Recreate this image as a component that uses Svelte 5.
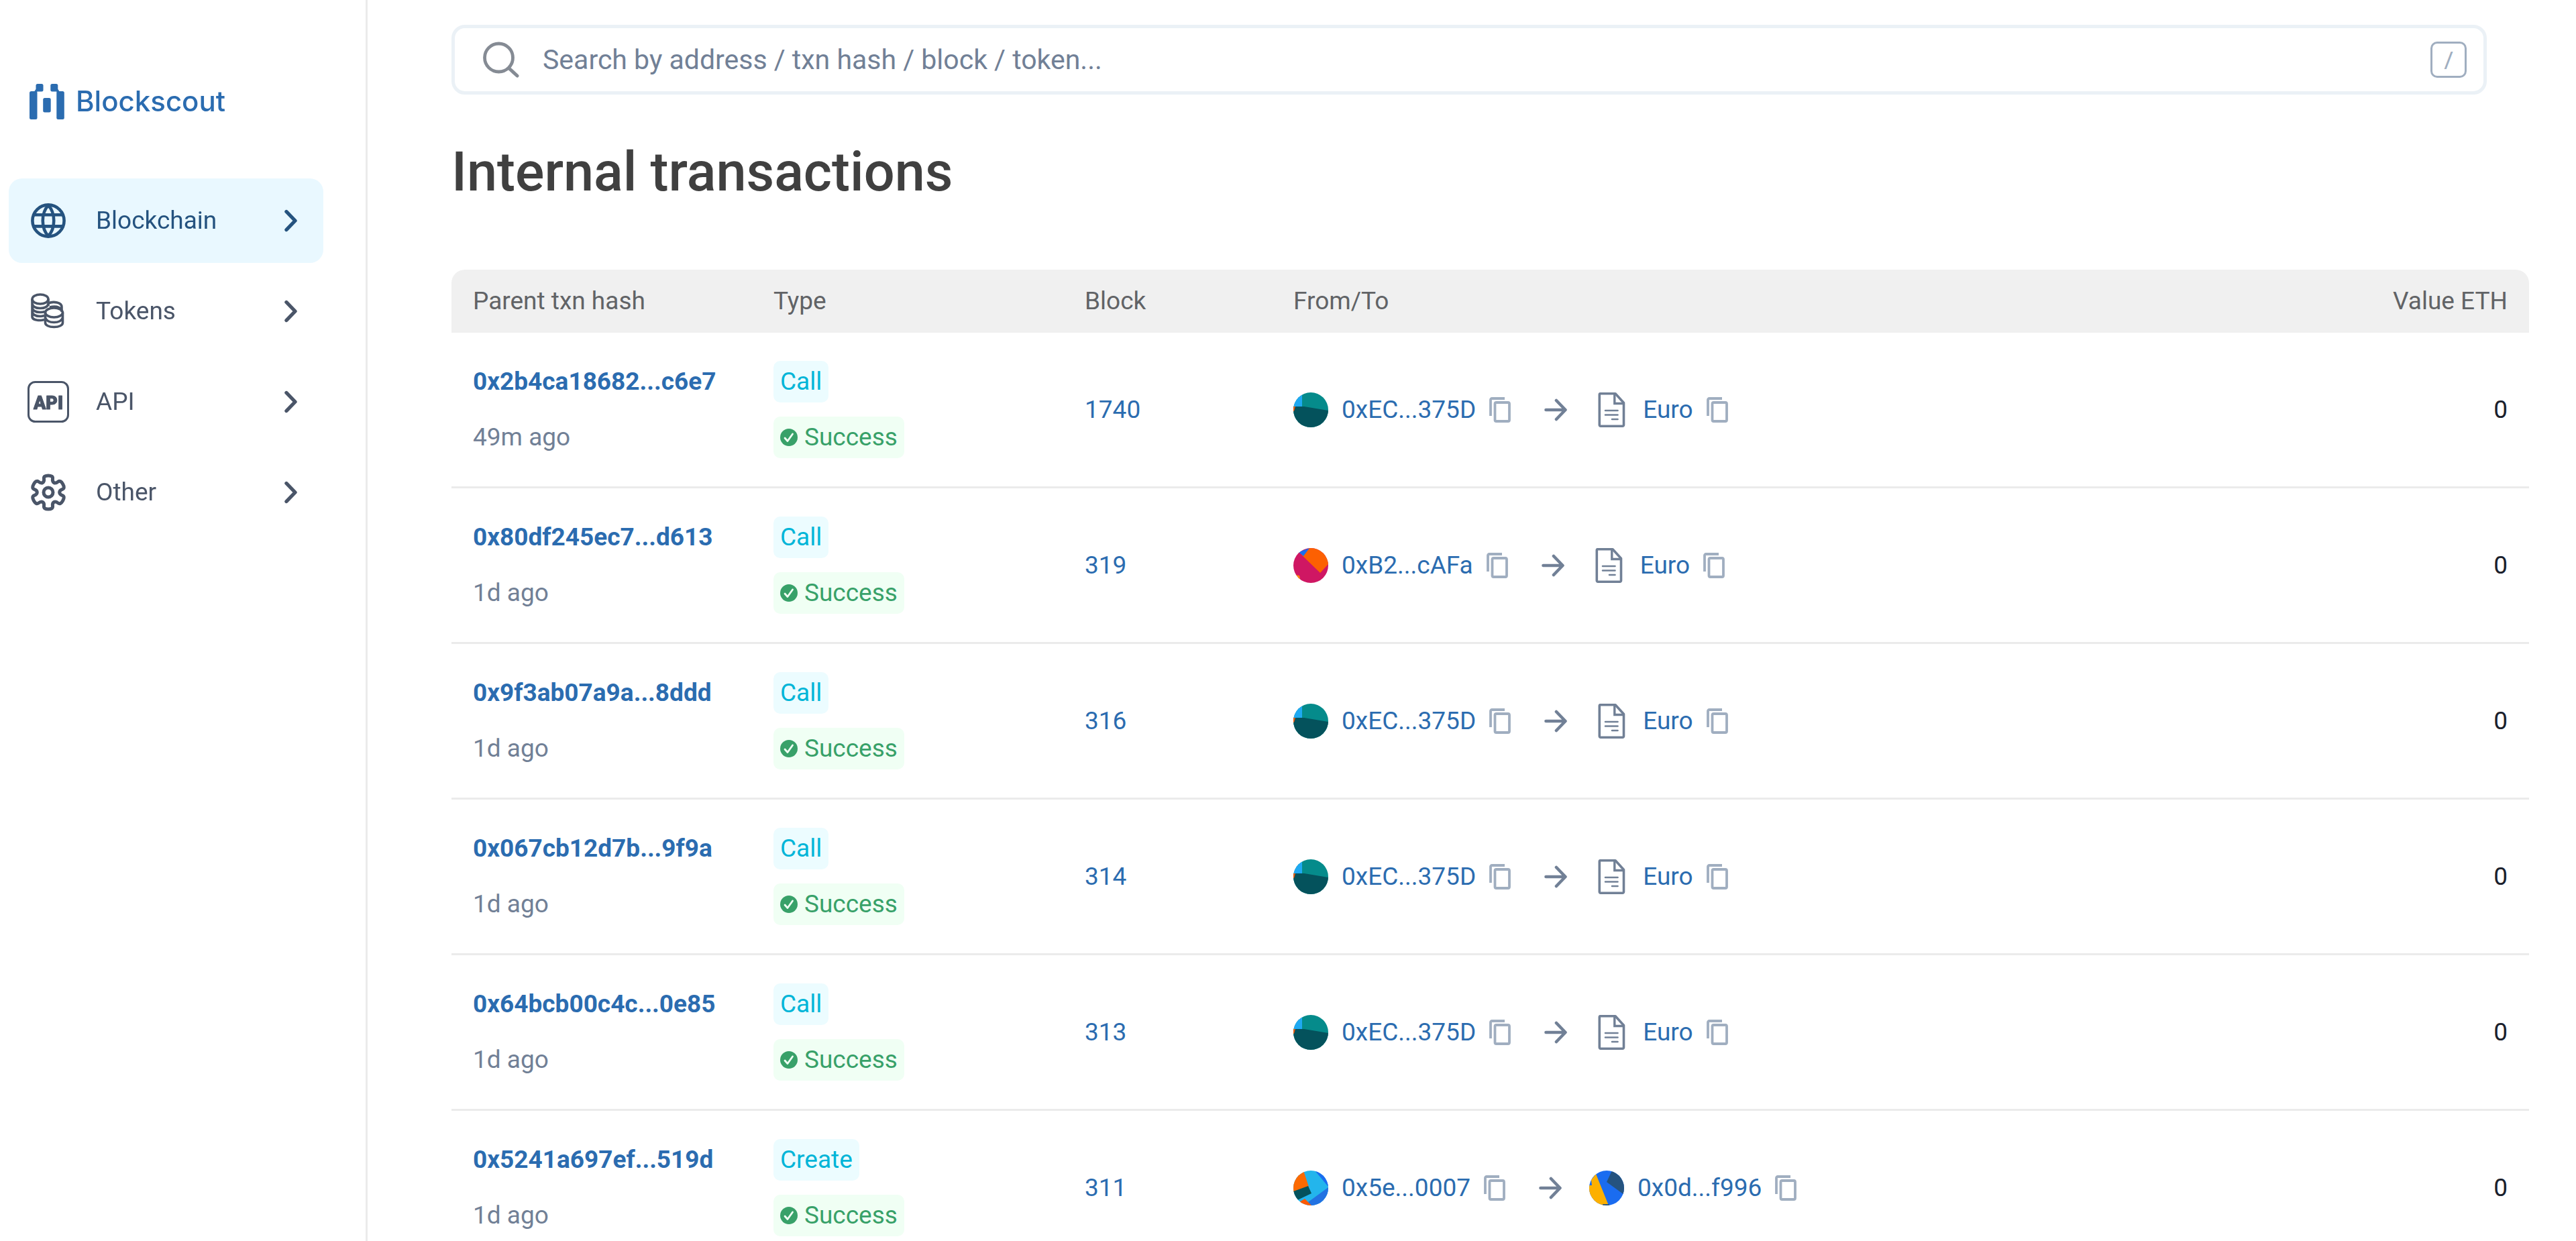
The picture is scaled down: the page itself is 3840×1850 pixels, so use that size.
<script>
  const nav = [
    { icon: 'globe', label: 'Blockchain', active: true },
    { icon: 'coins', label: 'Tokens' },
    { icon: 'api', label: 'API' },
    { icon: 'gear', label: 'Other' },
  ];

  const teal = { avatar: 'teal', name: '0xEC...375D' };
  const euro = { avatar: 'contract', name: 'Euro' };

  const rows = [
    { hash: '0x2b4ca18682...c6e7', age: '49m ago', type: 'Call', block: 1740, from: teal, to: euro },
    { hash: '0x80df245ec7...d613', age: '1d ago', type: 'Call', block: 319, from: { avatar: 'pink', name: '0xB2...cAFa' }, to: euro },
    { hash: '0x9f3ab07a9a...8ddd', age: '1d ago', type: 'Call', block: 316, from: teal, to: euro },
    { hash: '0x067cb12d7b...9f9a', age: '1d ago', type: 'Call', block: 314, from: teal, to: euro },
    { hash: '0x64bcb00c4c...0e85', age: '1d ago', type: 'Call', block: 313, from: teal, to: euro },
    {
      hash: '0x5241a697ef...519d', age: '1d ago', type: 'Create', block: 311,
      from: { avatar: 'sky', name: '0x5e...0007' }, to: { avatar: 'amber', name: '0x0d...f996' },
    },
  ];

  // Six-toothed cog, smoothed by running quadratic curves through edge midpoints.
  function cog(cx, cy) {
    const pts = [];
    for (let k = 0; k < 6; k++) {
      for (const [r, d] of [[17, -20], [26, -16], [26, 16], [17, 20]]) {
        const a = ((k * 60 + d - 90) * Math.PI) / 180;
        pts.push([cx + r * Math.cos(a), cy + r * Math.sin(a)]);
      }
    }
    const mid = (p, q) => `${((p[0] + q[0]) / 2).toFixed(1)} ${((p[1] + q[1]) / 2).toFixed(1)}`;
    let d = `M${mid(pts[pts.length - 1], pts[0])}`;
    pts.forEach((p, i) => {
      d += `Q${p[0].toFixed(1)} ${p[1].toFixed(1)} ${mid(p, pts[(i + 1) % pts.length])}`;
    });
    return d + 'Z';
  }
  const gearPath = cog(31, 31);
</script>

{#snippet navIcon(name)}
  <svg class="nav-icon" viewBox="0 0 62 62" aria-hidden="true">
    {#if name === 'globe'}
      <g fill="none" stroke="currentColor" stroke-width="4.6">
        <circle cx="31" cy="31" r="23.6" />
        <path d="M31 8C20 20 20 42 31 54M31 8C42 20 42 42 31 54M10 22.3H52M10 39.4H52" />
      </g>
    {:else if name === 'coins'}
      <g fill="none" stroke="currentColor" stroke-width="3.6">
        <ellipse cx="19" cy="13" rx="12" ry="7" />
        <path d="M7 13V39C7 42.500 12 44.500 19 44.500Q22 44.500 25 43.500M31 13V23M7 20C8 24.500 13 26.500 19 26.500S30 24.500 31 20M7 26C8 30.500 13 32.500 19 32.500Q23 32.500 26 31.500M7 32C8 36.500 13 38.500 19 38.500Q22 38.500 25 37.500" />
        <path d="M31 19C39 15.500 51 18 51 24.500V32M33 25Q46 22 51 29" />
        <ellipse cx="39.500" cy="33" rx="13" ry="7" />
        <path d="M26.500 33V48C26.500 52 32 54.500 39.500 54.500S52.500 52 52.500 48V33M26.500 40C27.500 45 33 47.500 39.500 47.500S51.500 45 52.500 40" />
      </g>
    {:else if name === 'api'}
      <rect x="1.500" y="1.500" width="59" height="59" rx="10" fill="none" stroke="currentColor" stroke-width="3" />
      <text x="31" y="42" text-anchor="middle" class="api-text">API</text>
    {:else}
      <path d={gearPath} fill="none" stroke="currentColor" stroke-width="5" />
      <circle cx="31" cy="31" r="7" fill="none" stroke="currentColor" stroke-width="5" />
    {/if}
  </svg>
{/snippet}

{#snippet avatar(name)}
  {#if name === 'contract'}
    <svg class="avatar" viewBox="0 0 52 52" fill="none" stroke="#718096" stroke-linejoin="round" stroke-linecap="round" aria-hidden="true">
      <path d="M8 1.800H31L43.500 15.500V48.500A1.700 1.700 0 0 1 41.800 50.200H9A1.700 1.700 0 0 1 7.300 48.500V3A1.500 1.500 0 0 1 8 1.800Z" stroke-width="3.6" />
      <path d="M29.800 3V16.500H43" stroke-width="3.4" stroke-linejoin="miter" />
      <path d="M16 27H34.500M16 33.500H34.500M26 40H34.500" stroke-width="2.6" />
    </svg>
  {:else}
    <svg class="avatar round" viewBox="0 0 52 52" aria-hidden="true">
      {#if name === 'teal'}
        <rect width="52" height="52" fill="#058b8b" />
        <path d="M0 0H13V21H0Z" fill="#1fa9f2" />
        <path d="M0 21H16L52 27V52H0Z" fill="#04525c" />
        <path d="M0 21H3L1 28H0ZM8 45L12 49L8 50Z" fill="#fb5a05" />
      {:else if name === 'pink'}
        <rect width="52" height="52" fill="#cf1763" />
        <path d="M12 10L24 0H52V24L40 37Z" fill="#fc6002" />
        <path d="M8 6L24 0L15 12Z" fill="#1b6fee" />
        <path d="M3 40L9 41L10 46L6 46Z" fill="#fb8a05" />
      {:else if name === 'sky'}
        <rect width="52" height="52" fill="#23b5ec" />
        <path d="M32 0L52 24V0Z" fill="#1a6cf0" />
        <path d="M52 25L22 47L26 52H52Z" fill="#2272e2" />
        <path d="M0 0H15L23 24L0 32Z" fill="#fc6a02" />
        <path d="M0 31L22 23L27 34L6 44L0 42Z" fill="#04525c" />
        <path d="M9 47L17 42L27 52H12Z" fill="#fc5a05" />
      {:else}
        <rect width="52" height="52" fill="#1a6cf0" />
        <path d="M34 0L26 17L52 36V0Z" fill="#25537f" />
        <path d="M10 5L29 52H0V22H4L3 14Z" fill="#fdb000" />
        <path d="M20 50H30V52H20Z" fill="#25537f" />
      {/if}
    </svg>
  {/if}
{/snippet}

{#snippet address(entity)}
  <span class="address">
    {@render avatar(entity.avatar)}
    <a href="#address">{entity.name}</a>
    <button class="copy" type="button" aria-label="Copy address">
      <svg viewBox="0 0 32 38" fill="none" stroke="currentColor" stroke-width="3.8" aria-hidden="true">
        <rect x="8.500" y="8" width="21.500" height="28" rx="2" />
        <path d="M2 28V4A2 2 0 0 1 4 2H23" />
      </svg>
    </button>
  </span>
{/snippet}

<div class="layout">
  <aside class="sidebar">
    <a class="logo" href="#home">
      <svg viewBox="0 0 52 53" fill="currentColor" aria-hidden="true">
        <rect x="0" y="11" width="11.500" height="42" rx="2.500" />
        <rect x="9.500" y="0" width="11" height="11.500" rx="2.500" />
        <path d="M7 11.500L9.500 8H13L11.500 11.500L10 15H7Z" />
        <rect x="20.200" y="21" width="11.500" height="21.500" rx="2.500" />
        <rect x="31.300" y="0" width="11" height="11.500" rx="2.500" />
        <rect x="40.300" y="11" width="11.500" height="42" rx="2.500" />
        <path d="M44.800 11.500L42.300 8H38.800L40.300 11.500L41.800 15H44.800Z" />
      </svg>
      <span>Blockscout</span>
    </a>
    <nav>
      {#each nav as item}
        <button type="button" class="nav-item" class:active={item.active}>
          {@render navIcon(item.icon)}
          <span class="nav-label">{item.label}</span>
          <svg class="chevron" viewBox="0 0 20 34" aria-hidden="true">
            <path d="M3 3.500L16 17L3 30.500" fill="none" stroke="currentColor" stroke-width="5.4" stroke-linecap="round" stroke-linejoin="round" />
          </svg>
        </button>
      {/each}
    </nav>
  </aside>

  <main>
    <form class="search" role="search">
      <svg class="search-icon" viewBox="0 0 54 54" fill="none" stroke="#858b94" stroke-linecap="round" aria-hidden="true">
        <circle cx="23.500" cy="24" r="21" stroke-width="4.8" />
        <path d="M39 40L51 51" stroke-width="5" />
      </svg>
      <input type="text" aria-label="Search" placeholder="Search by address / txn hash / block / token..." />
      <kbd>/</kbd>
    </form>

    <h1>Internal transactions</h1>

    <table>
      <colgroup>
        <col class="c-hash" /><col class="c-type" /><col class="c-block" /><col /><col class="c-value" />
      </colgroup>
      <thead>
        <tr>
          <th>Parent txn hash</th>
          <th>Type</th>
          <th>Block</th>
          <th>From/To</th>
          <th class="value">Value ETH</th>
        </tr>
      </thead>
      <tbody>
        {#each rows as row}
          <tr>
            <td>
              <div class="stack">
                <a class="hash" href="#tx">{row.hash}</a>
                <span class="age">{row.age}</span>
              </div>
            </td>
            <td>
              <div class="stack">
                <span class="tag type">{row.type}</span>
                <span class="tag success">
                  <svg viewBox="0 0 26 26" aria-hidden="true">
                    <circle cx="13" cy="13" r="13" fill="currentColor" />
                    <path d="M7 14L11 18.500L18.500 8" fill="none" stroke="#f0fff4" stroke-width="2.8" stroke-linecap="round" stroke-linejoin="round" />
                  </svg>
                  Success
                </span>
              </div>
            </td>
            <td><a href="#block">{row.block}</a></td>
            <td>
              <div class="transfer">
                {@render address(row.from)}
                <svg class="arrow" viewBox="0 0 34 34" aria-hidden="true">
                  <path d="M2.500 17H31M18 3L31.500 17L18 31" fill="none" stroke="#718096" stroke-width="4.6" stroke-linecap="round" stroke-linejoin="round" />
                </svg>
                {@render address(row.to)}
              </div>
            </td>
            <td class="value">0</td>
          </tr>
        {/each}
      </tbody>
    </table>
  </main>
</div>

<style>
  :global(body) {
    background: #fff;
  }
  .layout {
    display: flex;
    height: 100vh;
    overflow-y: auto;
    scrollbar-width: none;
    font-family: Roboto, 'Liberation Sans', sans-serif;
    font-size: 37px;
    line-height: 62px;
    color: #1a202c;
  }
  a {
    color: #2b6cb0;
    text-decoration: none;
  }
  button {
    font: inherit;
    border: 0;
    background: none;
    cursor: pointer;
  }

  .sidebar {
    position: sticky;
    top: 0;
    box-sizing: border-box;
    flex: 0 0 548px;
    height: 100vh;
    padding: 120px 63px 0 13px;
    border-right: 3px solid #ebebeb;
  }
  .logo {
    display: flex;
    align-items: center;
    gap: 17px;
    padding-left: 31px;
    font-family: Inter, sans-serif;
    font-weight: 500;
    font-size: 42px;
  }
  .logo svg {
    width: 52px;
    height: 53px;
  }
  nav {
    display: flex;
    flex-direction: column;
    gap: 9px;
    margin-top: 84px;
  }
  .nav-item {
    display: flex;
    align-items: center;
    height: 126px;
    padding: 0 38px 0 28px;
    border-radius: 20px;
    color: #4a5568;
    text-align: left;
  }
  .nav-item.active {
    background: #e9f8ff;
    color: #25537f;
  }
  .nav-icon {
    width: 62px;
    height: 62px;
  }
  .api-text {
    font: 900 27px Roboto, sans-serif;
    fill: currentColor;
    stroke: currentColor;
    stroke-linejoin: round;
  }
  .nav-label {
    flex: 1;
    padding-left: 40px;
  }
  .chevron {
    width: 20px;
    height: 34px;
  }

  main {
    flex: 1;
    min-width: 0;
    padding: 37px 70px 0 125px;
  }
  .search {
    display: flex;
    align-items: center;
    box-sizing: border-box;
    height: 104px;
    margin-right: 63px;
    padding: 0 25px 0 42px;
    border: 5px solid #ebf1f6;
    border-radius: 20px;
  }
  .search-icon {
    width: 54px;
    height: 54px;
  }
  .search input {
    flex: 1;
    min-width: 0;
    margin-left: 35px;
    padding: 0;
    border: 0;
    outline: 0;
    background: none;
    font: inherit;
    font-size: 41px;
    color: #1a202c;
  }
  .search input::placeholder {
    color: #718096;
    opacity: 1;
  }
  kbd {
    box-sizing: border-box;
    width: 54px;
    height: 54px;
    border: 3px solid #a0aec0;
    border-radius: 10px;
    font: 37px/48px 'Open Sans', sans-serif;
    text-align: center;
    color: #a0aec0;
  }
  h1 {
    margin: 66px 0 95px;
    font-weight: 500;
    font-size: 81px;
    line-height: 100px;
    color: #404040;
  }

  table {
    width: 100%;
    table-layout: fixed;
    border-collapse: separate;
    border-spacing: 0;
  }
  .c-hash {
    width: 448px;
  }
  .c-type {
    width: 464px;
  }
  .c-block {
    width: 311px;
  }
  .c-value {
    width: 300px;
  }
  th {
    height: 94px;
    padding: 0 32px;
    background: #f0f0f0;
    color: #616366;
    font-weight: 400;
    text-align: left;
  }
  th:first-child {
    border-top-left-radius: 20px;
  }
  th:last-child {
    border-top-right-radius: 20px;
  }
  td {
    padding: 42px 32px;
    border-bottom: 3px solid #ebebeb;
  }
  th.value,
  td.value {
    text-align: right;
  }
  .stack {
    display: flex;
    flex-direction: column;
    align-items: flex-start;
    gap: 21px;
  }
  .hash {
    font-weight: 700;
  }
  .age {
    color: #718096;
  }
  .tag {
    display: flex;
    align-items: center;
    gap: 10px;
    padding: 0 10px;
    border-radius: 10px;
  }
  .type {
    background: #ecfcff;
    color: #00b5d8;
  }
  .success {
    background: #f0fff4;
    color: #38a169;
  }
  .success svg {
    width: 26px;
    height: 26px;
  }
  .transfer,
  .address {
    display: flex;
    align-items: center;
  }
  .address {
    gap: 20px;
  }
  .avatar {
    width: 52px;
    height: 52px;
  }
  .round {
    border-radius: 50%;
  }
  .copy {
    display: flex;
    padding: 0;
    color: #a0aec0;
  }
  .copy svg {
    width: 32px;
    height: 38px;
  }
  .arrow {
    width: 34px;
    height: 34px;
    margin: 0 41px 0 50px;
  }
</style>
